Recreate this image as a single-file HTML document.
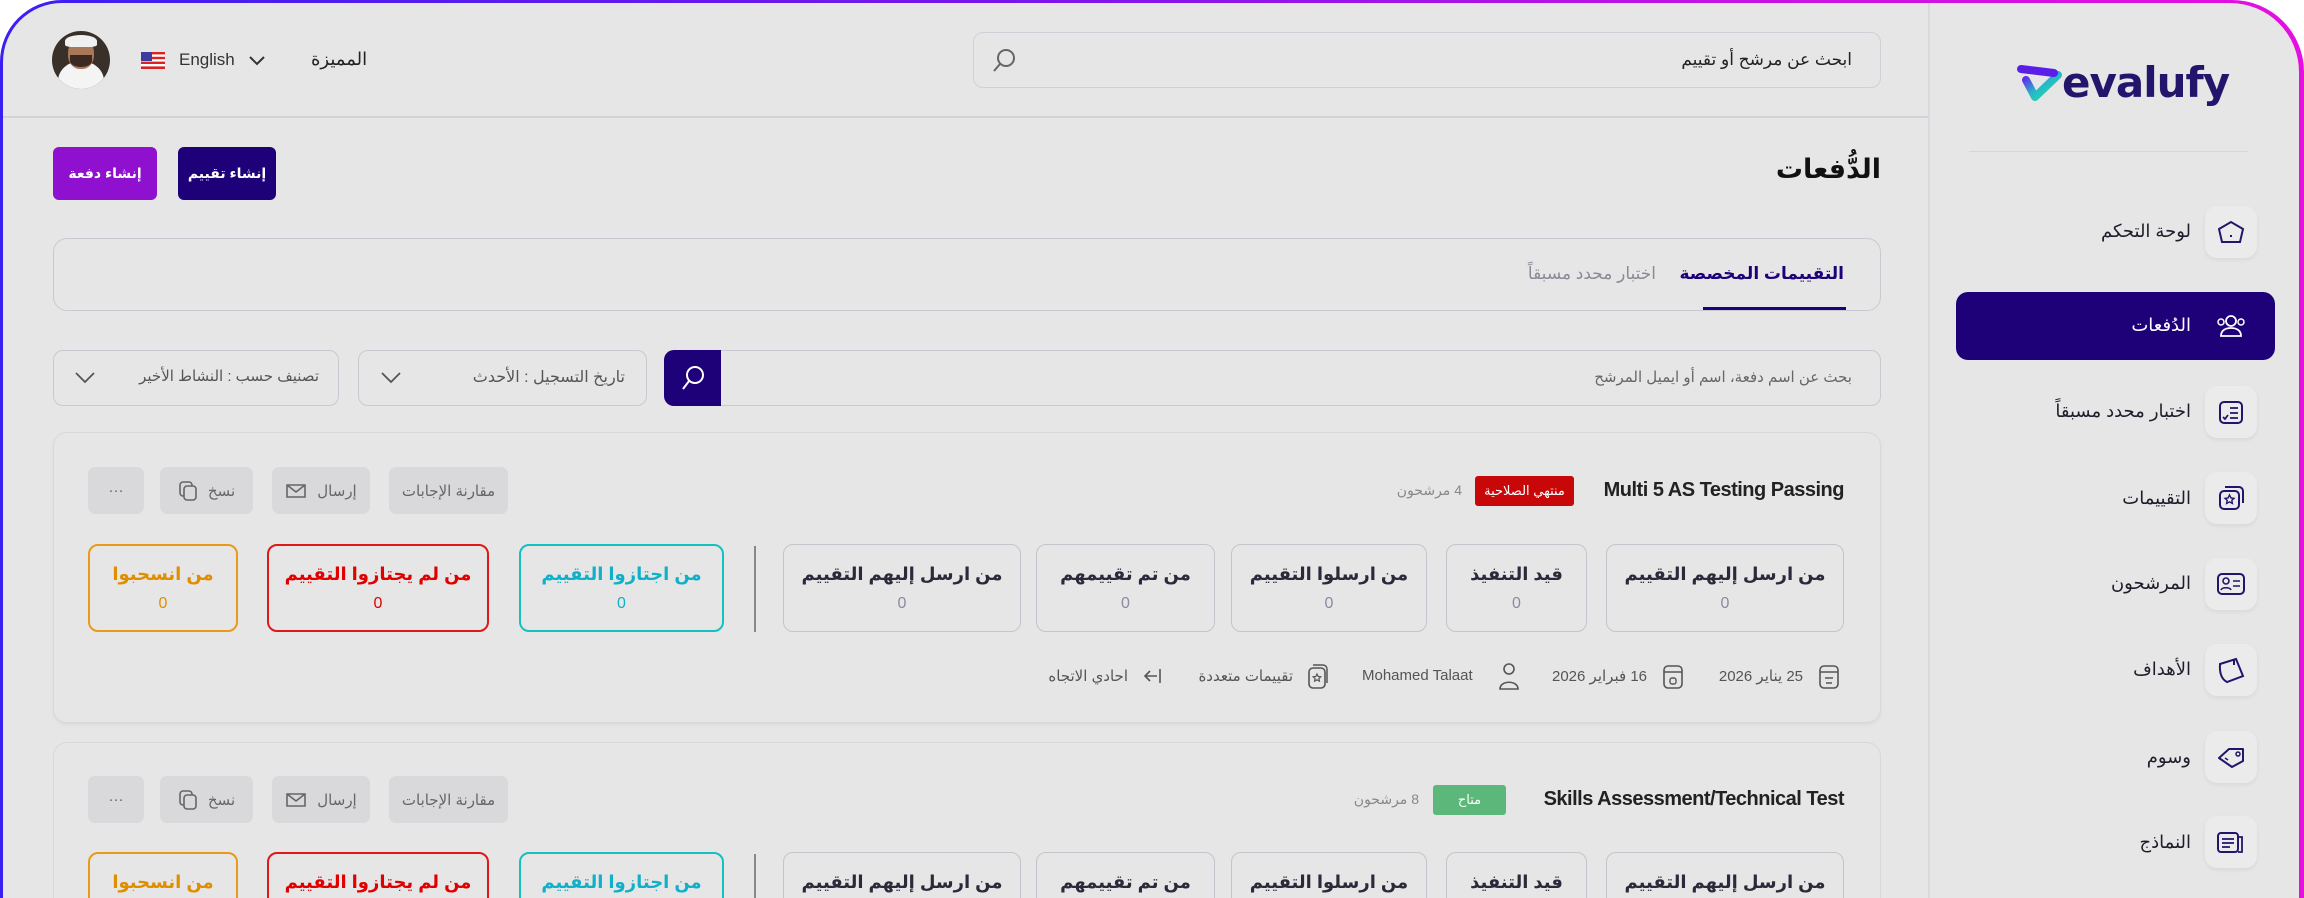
<!DOCTYPE html>
<html style="height:898px;overflow:hidden"><head><meta charset="utf-8">
<style>
*{box-sizing:border-box;margin:0;padding:0}
body{width:2304px;height:898px;overflow:hidden;background:#fff;font-family:"Liberation Sans","DejaVu Sans",sans-serif;color:#1d1d2b;position:relative}
.wrap{position:absolute;left:0;top:0;width:2304px;height:898px;overflow:hidden}
.frame{position:absolute;left:0;top:0;width:2304px;height:898px;border-radius:62px 72px 0 0;background:linear-gradient(90deg,#3a1ff2 0%,#7a16ea 45%,#c512e4 75%,#e50fe0 100%);}
.inner{position:absolute;left:3px;top:3px;width:2296px;height:895px;border-radius:59px 69px 0 0;background:#e6e6e6}
.a{position:absolute}
.c{position:absolute;display:flex;align-items:center;justify-content:center}
.r{direction:rtl;white-space:nowrap}
.box{position:absolute;border:1.5px solid #c9c9d1;border-radius:10px}
.stat{position:absolute;top:0;height:88px;border:1.5px solid #c4c4cc;border-radius:10px;display:flex;flex-direction:column;align-items:center;justify-content:center;direction:rtl}
.stat b{font-size:18px;font-weight:bold;color:#2a2a3a;white-space:nowrap}
.stat i{font-style:normal;font-size:16px;color:#8a8aa0;margin-top:10px}
.btn{position:absolute;top:0;height:47px;background:#d9d9dc;border-radius:7px;display:flex;align-items:center;justify-content:center;gap:10px;direction:rtl;font-size:15px;color:#666;white-space:nowrap}
.nav{position:absolute;right:113px;font-size:18px;direction:rtl;white-space:nowrap;color:#1d1d2b}
.ic{position:absolute;width:52px;height:52px;left:2205px;border-radius:12px;background:#ebebeb;box-shadow:0 2px 4px rgba(0,0,0,.06);display:flex;align-items:center;justify-content:center}
.meta{position:absolute;font-size:15px;color:#555;white-space:nowrap;direction:rtl}
</style></head><body><div class="wrap">
<div class="frame"></div>
<div class="inner"></div>
<!-- header -->
<div class="a" style="left:3px;top:116px;width:1926px;height:2px;background:#d2d2d8"></div>
<div class="a" style="left:1928px;top:3px;width:2px;height:895px;background:#dadade"></div>
<div class="a" style="left:52px;top:31px;width:58px;height:58px;border-radius:50%;overflow:hidden;background:#3a302a">
  <div class="a" style="left:6px;top:30px;width:46px;height:40px;border-radius:50% 50% 0 0;background:#f4f4f4"></div>
  <div class="a" style="left:16px;top:8px;width:26px;height:30px;border-radius:45%;background:#a87858"></div>
  <div class="a" style="left:13px;top:4px;width:32px;height:12px;border-radius:50% 50% 20% 20%;background:#f0f0f0"></div>
  <div class="a" style="left:18px;top:24px;width:22px;height:12px;border-radius:0 0 50% 50%;background:#3a2a22"></div>
</div>
<svg class="a" style="left:141px;top:52px" width="24" height="17"><rect width="24" height="17" fill="#fff"/><g fill="#d22"><rect y="0" width="24" height="2.4"/><rect y="4.8" width="24" height="2.4"/><rect y="9.6" width="24" height="2.4"/><rect y="14.4" width="24" height="2.6"/></g><rect width="11" height="9" fill="#3c3b9e"/></svg>
<div class="a" style="left:179px;top:50px;font-size:17px;color:#333">English</div>
<svg class="a" style="left:248px;top:55px" width="18" height="12"><path d="M2 2l7 7 7-7" stroke="#333" stroke-width="2" fill="none"/></svg>
<div class="a r" style="left:311px;top:49px;font-size:18px;color:#222">المميزة</div>
<div class="box" style="left:973px;top:32px;width:908px;height:56px;border-color:#d0d0d8"></div>
<svg class="a" style="left:992px;top:47px" width="26" height="26"><circle cx="14" cy="11" r="8" stroke="#666" stroke-width="2" fill="none"/><path d="M8 17l-6 7" stroke="#666" stroke-width="2"/></svg>
<div class="a r" style="right:452px;top:50px;font-size:17px;color:#222">ابحث عن مرشح أو تقييم</div>

<!-- sidebar -->
<svg class="a" style="left:2016px;top:64px" width="48" height="40"><defs><linearGradient id="lg" x1="0" y1="0" x2="1" y2="1"><stop offset="0" stop-color="#6a1cf0"/><stop offset=".5" stop-color="#25b8c8"/><stop offset="1" stop-color="#2ee0a0"/></linearGradient></defs><path d="M10 16 L19 33 L42 11" stroke="url(#lg)" stroke-width="8" stroke-linecap="round" stroke-linejoin="round" fill="none"/><path d="M5 5 L38 9" stroke="#5a1ee8" stroke-width="8" stroke-linecap="round"/></svg>
<div class="a" style="left:2062px;top:58px;font-size:42px;font-weight:bold;color:#22156b;font-family:'DejaVu Sans',sans-serif;letter-spacing:-1px">evalufy</div>
<div class="a" style="left:1969px;top:151px;width:279px;height:1px;background:#d6d6dc"></div>
<div class="a" style="left:1956px;top:292px;width:319px;height:68px;border-radius:12px;background:#1e0078"></div>

<div class="ic" style="top:206px"><svg width="30" height="26"><path d="M3 10 L15 3 L27 10 L24 23 L6 23 Z" stroke="#22156b" stroke-width="2" fill="none"/><path d="M15 16v2" stroke="#22156b" stroke-width="2"/></svg></div>
<div class="nav" style="top:221px">لوحة التحكم</div>
<div class="c" style="left:2205px;top:300px;width:52px;height:52px"><svg width="32" height="26"><circle cx="16" cy="8" r="5" stroke="#fff" stroke-width="1.8" fill="none"/><path d="M6 23c0-6 5-8 10-8s10 2 10 8z" stroke="#fff" stroke-width="1.8" fill="none"/><circle cx="6" cy="9" r="3" stroke="#fff" stroke-width="1.5" fill="none"/><circle cx="26" cy="9" r="3" stroke="#fff" stroke-width="1.5" fill="none"/></svg></div>
<div class="nav" style="top:315px;color:#fff">الدُفعات</div>
<div class="ic" style="top:386px"><svg width="28" height="28"><rect x="3" y="4" width="22" height="21" rx="4" stroke="#22156b" stroke-width="2" fill="none"/><path d="M13 10h8M13 15h8M13 20h8M6 19l2 2 3-4" stroke="#22156b" stroke-width="1.8" fill="none"/></svg></div>
<div class="nav" style="top:401px">اختبار محدد مسبقاً</div>
<div class="ic" style="top:472px"><svg width="28" height="28"><rect x="3" y="7" width="19" height="18" rx="4" stroke="#22156b" stroke-width="2" fill="none"/><path d="M8 3h14a4 4 0 0 1 4 4v12" stroke="#22156b" stroke-width="2" fill="none"/><path d="M12.5 11l1.5 3 3 .4-2.2 2 .6 3-2.9-1.5-2.9 1.5.6-3-2.2-2 3-.4z" stroke="#22156b" stroke-width="1.4" fill="none"/></svg></div>
<div class="nav" style="top:488px">التقييمات</div>
<div class="ic" style="top:558px"><svg width="30" height="26"><rect x="2" y="3" width="26" height="20" rx="4" stroke="#22156b" stroke-width="2" fill="none"/><circle cx="10" cy="10" r="3" stroke="#22156b" stroke-width="1.6" fill="none"/><path d="M5 19c1-3 9-3 10 0M17 10h7M17 15h7" stroke="#22156b" stroke-width="1.6" fill="none"/></svg></div>
<div class="nav" style="top:573px">المرشحون</div>
<div class="ic" style="top:644px"><svg width="30" height="28"><path d="M4 8 L20 3 L27 20 L11 26 Q3 22 4 8z" stroke="#22156b" stroke-width="2" fill="none"/><path d="M18 4v5" stroke="#22156b" stroke-width="2"/></svg></div>
<div class="nav" style="top:659px">الأهداف</div>
<div class="ic" style="top:731px"><svg width="30" height="26"><path d="M3 14 L13 5 H27 V17 L16 23 Z" stroke="#22156b" stroke-width="2" fill="none" stroke-linejoin="round"/><circle cx="22" cy="10" r="2" stroke="#22156b" stroke-width="1.5" fill="none"/><path d="M9 14l3 2" stroke="#22156b" stroke-width="1.5"/></svg></div>
<div class="nav" style="top:747px">وسوم</div>
<div class="ic" style="top:816px"><svg width="30" height="26"><rect x="2" y="4" width="20" height="19" rx="3" stroke="#22156b" stroke-width="2" fill="none"/><path d="M22 8h4v15h-4M6 10h12M6 14h12M6 18h8" stroke="#22156b" stroke-width="1.8" fill="none"/></svg></div>
<div class="nav" style="top:832px">النماذج</div>

<!-- page title / buttons -->
<div class="a r" style="right:423px;top:154px;font-size:27px;font-weight:bold;color:#111">الدُّفعات</div>
<div class="c r" style="left:178px;top:147px;width:98px;height:53px;background:#1e0078;border-radius:6px;color:#fff;font-size:14px;font-weight:bold">إنشاء تقييم</div>
<div class="c r" style="left:53px;top:147px;width:104px;height:53px;background:#9010d0;border-radius:6px;color:#fff;font-size:14px;font-weight:bold">إنشاء دفعة</div>

<!-- tabs -->
<div class="box" style="left:53px;top:238px;width:1828px;height:73px;border-radius:14px"></div>
<div class="a r" style="right:460px;top:264px;font-size:17px;font-weight:bold;color:#1e0078">التقييمات المخصصة</div>
<div class="a" style="left:1703px;top:307px;width:143px;height:3px;background:#1e0078"></div>
<div class="a r" style="right:648px;top:264px;font-size:17px;color:#8a8a98">اختبار محدد مسبقاً</div>

<!-- search row -->
<div class="box" style="left:664px;top:350px;width:1217px;height:56px"></div>
<div class="c" style="left:664px;top:350px;width:57px;height:56px;background:#1e0078;border-radius:10px 0 0 10px"><svg width="28" height="28"><circle cx="16" cy="11" r="8" stroke="#fff" stroke-width="2" fill="none"/><path d="M10 17l-6 8" stroke="#fff" stroke-width="2"/></svg></div>
<div class="a r" style="right:452px;top:368px;font-size:15px;color:#666">بحث عن اسم دفعة، اسم أو ايميل المرشح</div>
<div class="box" style="left:358px;top:350px;width:289px;height:56px"></div>
<div class="a r" style="right:1679px;top:367px;font-size:16px;color:#555">تاريخ التسجيل : الأحدث</div>
<svg class="a" style="left:380px;top:370px" width="22" height="16"><path d="M2 3l9 9 9-9" stroke="#555" stroke-width="1.8" fill="none"/></svg>
<div class="box" style="left:53px;top:350px;width:286px;height:56px"></div>
<div class="a r" style="right:1985px;top:367px;font-size:15px;color:#555">تصنيف حسب : النشاط الأخير</div>
<svg class="a" style="left:74px;top:370px" width="22" height="16"><path d="M2 3l9 9 9-9" stroke="#555" stroke-width="1.8" fill="none"/></svg>

<!-- card 1 -->
<div class="a" style="left:53px;top:432px;width:1828px;height:291px;border:1.5px solid #d8d8dc;border-radius:14px;box-shadow:0 2px 4px rgba(0,0,0,.05)"></div>
<div class="a" style="right:460px;top:479px;font-size:20px;font-weight:bold;color:#222;white-space:nowrap;letter-spacing:-0.5px">Multi 5 AS Testing Passing</div>
<div class="c r" style="left:1475px;top:476px;width:99px;height:30px;background:#c80808;border-radius:3px;color:#fff;font-size:13px">منتهي الصلاحية</div>
<div class="a r" style="right:842px;top:482px;font-size:14px;color:#888">4 مرشحون</div>
<div class="a" style="left:0;top:467px;width:2304px;height:47px">
<div class="btn" style="left:88px;width:56px">···</div>
<div class="btn" style="left:160px;width:93px">نسخ <svg width="20" height="22"><rect x="2" y="2" width="12" height="14" rx="3" stroke="#666" stroke-width="1.6" fill="none"/><rect x="6" y="6" width="12" height="14" rx="3" stroke="#666" stroke-width="1.6" fill="#d9d9dc"/></svg></div>
<div class="btn" style="left:272px;width:98px">إرسال <svg width="22" height="20"><path d="M2 4h18v12H2z M2 4l9 7 9-7" stroke="#666" stroke-width="1.6" fill="none"/></svg></div>
<div class="btn" style="left:389px;width:119px">مقارنة الإجابات</div>
</div>
<div class="a" style="left:0;top:544px;width:2304px;height:88px">
<div class="stat" style="left:1606px;width:238px"><b>من ارسل إليهم التقييم</b><i>0</i></div>
<div class="stat" style="left:1446px;width:141px"><b>قيد التنفيذ</b><i>0</i></div>
<div class="stat" style="left:1231px;width:196px"><b>من ارسلوا التقييم</b><i>0</i></div>
<div class="stat" style="left:1036px;width:179px"><b>من تم تقييمهم</b><i>0</i></div>
<div class="stat" style="left:783px;width:238px"><b>من ارسل إليهم التقييم</b><i>0</i></div>
<div class="a" style="left:754px;top:2px;width:2px;height:86px;background:#888"></div>
<div class="stat" style="left:519px;width:205px;border:2px solid #14c0c0"><b style="color:#10b0c8">من اجتازوا التقييم</b><i style="color:#10b0c8">0</i></div>
<div class="stat" style="left:267px;width:222px;border:2px solid #e01818"><b style="color:#e00000">من لم يجتازوا التقييم</b><i style="color:#e00000">0</i></div>
<div class="stat" style="left:88px;width:150px;border:2px solid #e89a18"><b style="color:#e08e00">من انسحبوا</b><i style="color:#e08e00">0</i></div>
</div>
<!-- meta -->
<svg class="a" style="left:1817px;top:662px" width="24" height="28"><rect x="3" y="4" width="18" height="22" rx="4" stroke="#555" stroke-width="1.6" fill="none"/><path d="M3 10h18M8 16h8M9 21h6" stroke="#555" stroke-width="1.5"/></svg>
<div class="meta" style="right:501px;top:667px">25 يناير 2026</div>
<svg class="a" style="left:1661px;top:662px" width="24" height="28"><rect x="3" y="4" width="18" height="22" rx="4" stroke="#555" stroke-width="1.6" fill="none"/><path d="M3 10h18" stroke="#555" stroke-width="1.5"/><rect x="9" y="16" width="6" height="6" rx="2" stroke="#555" stroke-width="1.4" fill="none"/></svg>
<div class="meta" style="right:657px;top:667px">16 فبراير 2026</div>
<svg class="a" style="left:1497px;top:661px" width="24" height="30"><circle cx="12" cy="8" r="5" stroke="#555" stroke-width="1.6" fill="none"/><path d="M3 28c0-9 18-9 18 0z" stroke="#555" stroke-width="1.6" fill="none"/></svg>
<div class="meta" style="left:1362px;top:667px">Mohamed Talaat</div>
<svg class="a" style="left:1306px;top:662px" width="24" height="28"><rect x="3" y="6" width="16" height="20" rx="4" stroke="#555" stroke-width="1.6" fill="none"/><path d="M7 3h10a4 4 0 0 1 4 4v14" stroke="#555" stroke-width="1.5" fill="none"/><path d="M11 12l1.2 2.5 2.6.3-1.9 1.7.5 2.6-2.4-1.3-2.4 1.3.5-2.6-1.9-1.7 2.6-.3z" stroke="#555" stroke-width="1.2" fill="none"/></svg>
<div class="meta" style="right:1011px;top:667px">تقييمات متعددة</div>
<svg class="a" style="left:1142px;top:667px" width="22" height="18"><path d="M18 2v14M15 9H3M8 4L3 9l5 5" stroke="#555" stroke-width="1.6" fill="none"/></svg>
<div class="meta" style="right:1176px;top:667px">احادي الاتجاه</div>

<!-- card 2 -->
<div class="a" style="left:53px;top:742px;width:1828px;height:156px;border:1.5px solid #d8d8dc;border-bottom:none;border-radius:14px 14px 0 0"></div>
<div class="a" style="right:460px;top:788px;font-size:20px;font-weight:bold;color:#222;white-space:nowrap;letter-spacing:-0.5px">Skills Assessment/Technical Test</div>
<div class="c r" style="left:1433px;top:785px;width:73px;height:30px;background:#5cb87a;border-radius:3px;color:#fff;font-size:13px">متاح</div>
<div class="a r" style="right:885px;top:791px;font-size:14px;color:#888">8 مرشحون</div>
<div class="a" style="left:0;top:776px;width:2304px;height:47px">
<div class="btn" style="left:88px;width:56px">···</div>
<div class="btn" style="left:160px;width:93px">نسخ <svg width="20" height="22"><rect x="2" y="2" width="12" height="14" rx="3" stroke="#666" stroke-width="1.6" fill="none"/><rect x="6" y="6" width="12" height="14" rx="3" stroke="#666" stroke-width="1.6" fill="#d9d9dc"/></svg></div>
<div class="btn" style="left:272px;width:98px">إرسال <svg width="22" height="20"><path d="M2 4h18v12H2z M2 4l9 7 9-7" stroke="#666" stroke-width="1.6" fill="none"/></svg></div>
<div class="btn" style="left:389px;width:119px">مقارنة الإجابات</div>
</div>
<div class="a" style="left:0;top:852px;width:2304px;height:46px;overflow:hidden">
<div class="stat" style="left:1606px;width:238px"><b>من ارسل إليهم التقييم</b><i>0</i></div>
<div class="stat" style="left:1446px;width:141px"><b>قيد التنفيذ</b><i>0</i></div>
<div class="stat" style="left:1231px;width:196px"><b>من ارسلوا التقييم</b><i>0</i></div>
<div class="stat" style="left:1036px;width:179px"><b>من تم تقييمهم</b><i>0</i></div>
<div class="stat" style="left:783px;width:238px"><b>من ارسل إليهم التقييم</b><i>0</i></div>
<div class="a" style="left:754px;top:2px;width:2px;height:86px;background:#888"></div>
<div class="stat" style="left:519px;width:205px;border:2px solid #14c0c0"><b style="color:#10b0c8">من اجتازوا التقييم</b><i style="color:#10b0c8">0</i></div>
<div class="stat" style="left:267px;width:222px;border:2px solid #e01818"><b style="color:#e00000">من لم يجتازوا التقييم</b><i style="color:#e00000">0</i></div>
<div class="stat" style="left:88px;width:150px;border:2px solid #e89a18"><b style="color:#e08e00">من انسحبوا</b><i style="color:#e08e00">0</i></div>
</div>
</div></body></html>
